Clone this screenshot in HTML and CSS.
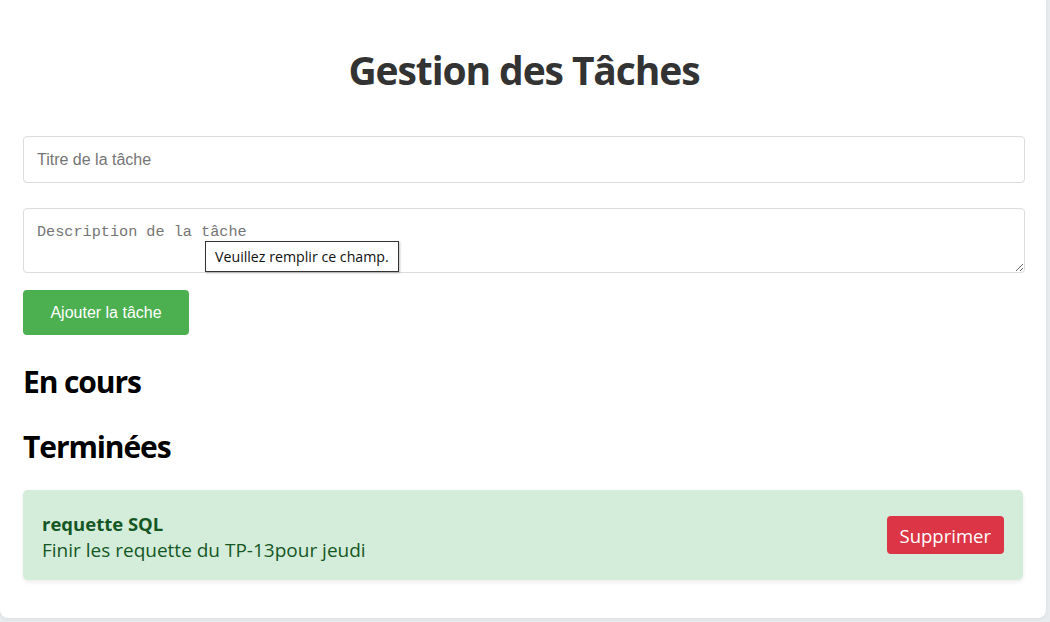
FILE: index.html
```html
<!DOCTYPE html>
<html lang="fr">
<head>
<meta charset="utf-8">
<title>Gestion des Tâches</title>
<link rel="stylesheet" href="styles.css">
</head>
<body>
<div class="container">
  <h1 class="title">Gestion des Tâches</h1>
  <form class="task-form">
    <input class="field" type="text" placeholder="Titre de la tâche">
    <div class="area-wrap">
      <textarea class="area" placeholder="Description de la tâche"></textarea>
      <div class="tooltip">Veuillez remplir ce champ.</div>
    </div>
    <button class="add-btn" type="button">Ajouter la tâche</button>
  </form>
  <h2 class="section">En cours</h2>
  <h2 class="section">Terminées</h2>
  <div class="task done">
    <div class="task-text">
      <div class="task-title">requette SQL</div>
      <div class="task-desc">Finir les requette du TP-13pour jeudi</div>
    </div>
    <button class="del-btn" type="button">Supprimer</button>
  </div>
</div>
</body>
</html>
```
FILE: styles.css
```css
html, body {
  margin: 0;
  padding: 0;
}
body {
  background: #e8ebee;
  font-family: "Open Sans", "Noto Sans", sans-serif;
  height: 622px;
  overflow: hidden;
}
.container {
  width: 1046px;
  height: 618px;
  box-sizing: border-box;
  background: #fff;
  border-radius: 0 0 8px 8px;
  padding: 46px 21px 0 23px;
  box-shadow: 0 1px 4px rgba(0,0,0,0.06);
}
.title {
  margin: 0 0 42px;
  font-size: 39px;
  line-height: 48px;
  font-weight: 700;
  color: #333;
  text-align: center;
  letter-spacing: -1.1px;
}
.task-form {
  display: flex;
  flex-direction: column;
  align-items: flex-start;
}
.field {
  display: block;
  width: 100%;
  height: 47px;
  box-sizing: border-box;
  border: 1px solid #dcdcdc;
  border-radius: 4px;
  padding: 0 13px;
  font-family: "Liberation Sans", Arial, sans-serif;
  font-size: 16px;
  margin: 0 0 25px;
  outline: none;
}
.field::placeholder {
  color: #757575;
}
.area-wrap {
  position: relative;
  width: 100%;
}
.area {
  display: block;
  width: 100%;
  height: 65px;
  box-sizing: border-box;
  border: 1px solid #dcdcdc;
  border-radius: 4px;
  padding: 14px 13px 12px;
  font-family: "Liberation Mono", "DejaVu Sans Mono", monospace;
  font-size: 15.2px;
  margin: 0;
  outline: none;
}
.area::placeholder {
  color: #757575;
}
.tooltip {
  position: absolute;
  left: 182px;
  top: 33px;
  height: 31px;
  box-sizing: border-box;
  padding: 0 9px;
  border: 1px solid #333;
  background: #fff;
  font-family: "Open Sans", "Noto Sans", sans-serif;
  font-size: 14.2px;
  line-height: 29px;
  color: #111;
  white-space: nowrap;
  box-shadow: 1px 1px 2px rgba(0,0,0,0.25);
}
.add-btn {
  margin-top: 17px;
  width: 166px;
  height: 45px;
  border: none;
  border-radius: 4px;
  background: #4caf50;
  color: #fff;
  font-family: "Liberation Sans", Arial, sans-serif;
  font-size: 16px;
  padding: 0;
}
.section {
  margin: 29px 0 0;
  font-size: 30px;
  line-height: 36px;
  font-weight: 700;
  color: #000;
  letter-spacing: -1.1px;
}
.section + .section {
  margin-top: 29px;
}
.task {
  margin-top: 25px;
  width: 1000px;
  height: 90px;
  box-sizing: border-box;
  display: flex;
  align-items: center;
  justify-content: space-between;
  padding: 4px 19px 0;
  background: #d4edda;
  border-radius: 5px;
  box-shadow: 0 2px 4px rgba(0,0,0,0.08);
  color: #155724;
}
.task-title {
  font-size: 18.5px;
  font-weight: 700;
  line-height: 27px;
}
.task-desc {
  font-size: 19px;
  line-height: 27px;
}
.del-btn {
  height: 38px;
  margin-top: -4px;
  padding: 0 13px;
  border: none;
  border-radius: 4px;
  background: #dc3545;
  color: #fff;
  font-family: "Open Sans", "Noto Sans", sans-serif;
  font-size: 18.5px;
}
```
